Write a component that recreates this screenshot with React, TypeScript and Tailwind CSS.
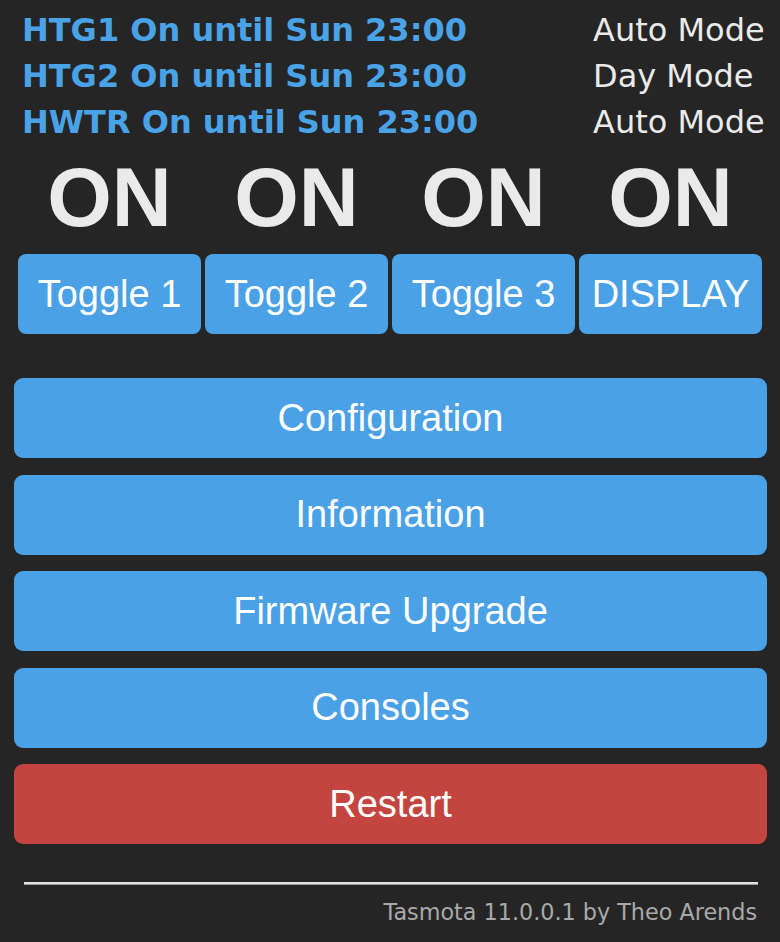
import React from "react";

const dv = { fontFamily: '"DejaVu Sans", Verdana, sans-serif' };
const ar = { fontFamily: '"Liberation Sans", Arial, sans-serif' };

export default function App() {
  const status = [
    ["HTG1 On until Sun 23:00", "Auto Mode"],
    ["HTG2 On until Sun 23:00", "Day Mode"],
    ["HWTR On until Sun 23:00", "Auto Mode"],
  ];
  const toggles = ["Toggle 1", "Toggle 2", "Toggle 3", "DISPLAY"];
  const menu = ["Configuration", "Information", "Firmware Upgrade", "Consoles"];
  return (
    <div className="w-[780px] h-[942px] bg-[#252525] overflow-hidden px-[14px] pt-[7px]">
      <div className="pl-[8px] grid grid-cols-[571px_1fr]" style={dv}>
        {status.map(([a, b]) => (
          <React.Fragment key={a}>
            <div className="text-[32px] leading-[46px] font-bold text-[#4aa3e6] whitespace-nowrap">{a}</div>
            <div className="text-[32px] leading-[46px] text-[#eaeaea] whitespace-nowrap">{b}</div>
          </React.Fragment>
        ))}
      </div>
      <div className="mt-[3px] mx-[4px] grid grid-cols-4 gap-[4px]" style={ar}>
        {toggles.map((t) => (
          <div key={t} className="text-center text-[83px] leading-[100px] font-bold text-[#eaeaea]">ON</div>
        ))}
      </div>
      <div className="mt-[6px] mx-[4px] grid grid-cols-4 gap-[4px]" style={ar}>
        {toggles.map((t) => (
          <div key={t} className="h-[80px] rounded-[8px] bg-[#4aa1e6] flex items-center justify-center text-white text-[38px] whitespace-nowrap">{t}</div>
        ))}
      </div>
      <div className="mt-[44px] flex flex-col gap-[16.5px] w-[753px]" style={ar}>
        {menu.map((m) => (
          <div key={m} className="h-[80px] rounded-[9px] bg-[#4aa1e6] flex items-center justify-center text-white text-[38px]">{m}</div>
        ))}
        <div className="h-[80px] rounded-[9px] bg-[#c4453f] flex items-center justify-center text-white text-[38px]">Restart</div>
      </div>
      <div className="mt-[37.5px] ml-[10px] w-[734px] border-t-2 border-[#e2e2e2] border-b border-b-[#9a9a9a]" />
      <div className="mt-[12px] w-[743px] text-right text-[22.3px] leading-[30px] text-[#a9a9a9]" style={dv}>
        Tasmota 11.0.0.1 by Theo Arends
      </div>
    </div>
  );
}
